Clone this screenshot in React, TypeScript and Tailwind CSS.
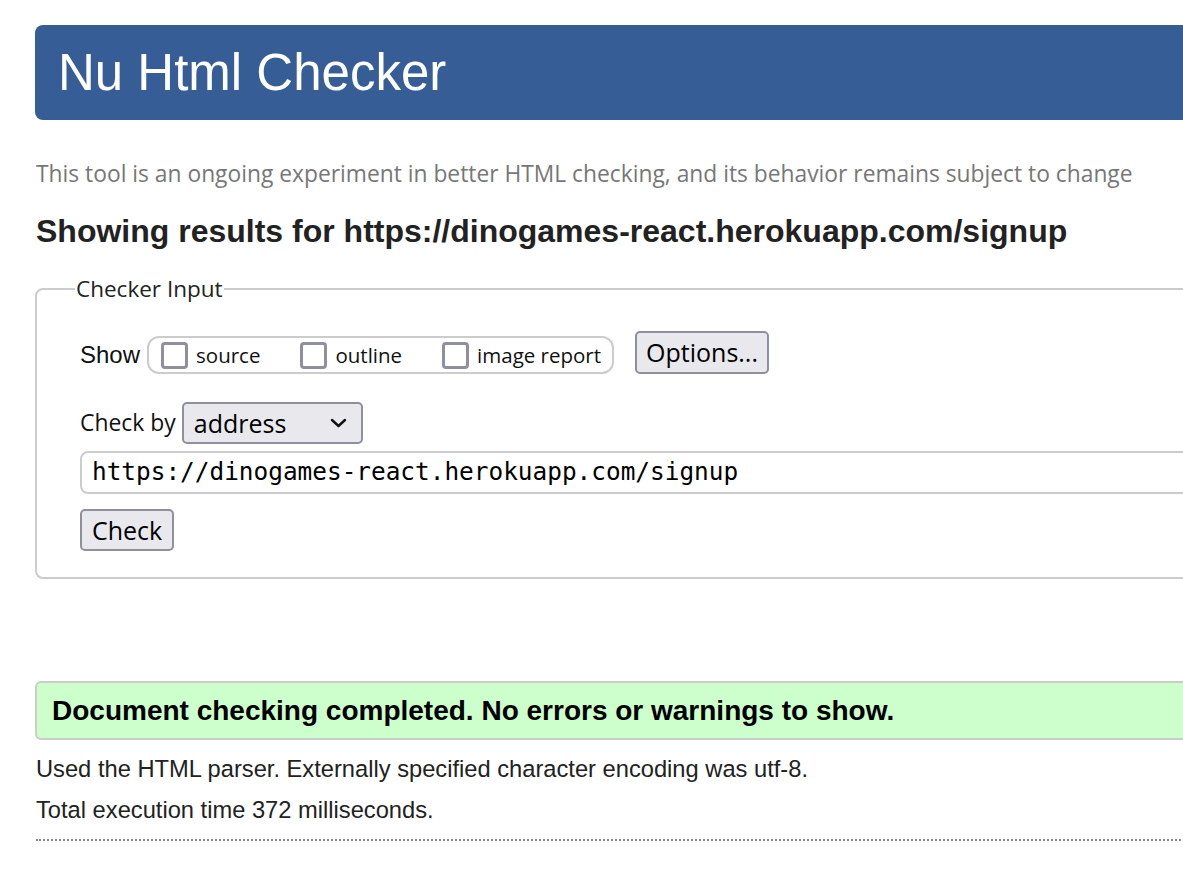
const seg = "font-['Open_Sans','Noto_Sans',sans-serif]";
const arial = "font-['Liberation_Sans',Arial,sans-serif]";

const Box = ({ label }: { label: string }) => (
  <label className="flex items-center gap-[8px]">
    <span className="w-[27px] h-[27px] rounded-[4px] border-[3px] border-[#8f8f9d] bg-white" />
    <span className={`${seg} text-[20.5px] text-[#111]`}>{label}</span>
  </label>
);

export default function App() {
  return (
    <div className="w-[1183px] h-[891px] overflow-hidden bg-white">
      <div className="w-[1400px] pl-[35px] pt-[25px]">
        <div className="h-[95px] bg-[#365d95] rounded-l-[8px] flex items-center pl-[23px]">
          <h1 className={`${arial} text-[51px] text-white leading-none`}>Nu Html Checker</h1>
        </div>

        <p className={`${seg} h-[30px] flex items-center text-[22.8px] text-[#777] mt-[39px] pl-px`}>
          This tool is an ongoing experiment in better HTML checking, and its behavior remains subject to change
        </p>

        <h2 className={`${arial} h-[36px] flex items-center font-bold text-[32px] text-[#222] mt-[24px] pl-px`}>
          Showing results for https://dinogames-react.herokuapp.com/signup
        </h2>

        <fieldset className="mt-[23px] border-2 border-[#ccc] rounded-l-[8px] pl-[43px] pb-[26px]">
          <legend className={`${seg} text-[22.5px] leading-[34px] text-[#222] px-[1px] -ml-[5px]`}>Checker Input</legend>

          <div className="flex items-end mt-[25px]">
            <span className={`${arial} h-[38px] flex items-center text-[24px] text-[#111]`}>Show</span>
            <div className="ml-[7px] w-[467px] h-[38px] border-2 border-[#ccc] rounded-[12px] flex items-center pl-[12px] gap-[40px]">
              <Box label="source" />
              <Box label="outline" />
              <Box label="image report" />
            </div>
            <button className={`${seg} ml-[21px] h-[43px] px-[9px] bg-[#e9e9ed] border-2 border-[#8f8f9d] rounded-[5px] text-[25px] text-black leading-none`}>
              Options...
            </button>
          </div>

          <div className="flex items-center mt-[28px]">
            <span className={`${seg} text-[22.9px] text-[#111]`}>Check by</span>
            <div className="ml-[6px] w-[181px] h-[42px] bg-[#e9e9ed] border-2 border-[#8f8f9d] rounded-[5px] flex items-center justify-between pl-[10px] pr-[14px]">
              <span className={`${seg} text-[25px] text-black leading-none`}>address</span>
              <svg width="17" height="10" viewBox="0 0 17 10" fill="none">
                <path d="M2 2l6.5 6 6.5-6" stroke="#111" strokeWidth="2.4" strokeLinecap="round" strokeLinejoin="round" />
              </svg>
            </div>
          </div>

          <div className="mt-[7px] h-[43px] border-2 border-[#ccc] rounded-l-[8px] flex items-center pl-[10px]">
            <span className="font-['DejaVu_Sans_Mono',monospace] text-[24.4px] text-black leading-none">
              https://dinogames-react.herokuapp.com/signup
            </span>
          </div>

          <button className={`${seg} mt-[15px] h-[42px] px-[10px] bg-[#e9e9ed] border-2 border-[#8f8f9d] rounded-[5px] text-[25px] text-black leading-none`}>
            Check
          </button>
        </fieldset>

        <div className="mt-[102px] h-[59px] bg-[#ccffcc] border-2 border-[#ccc] rounded-l-[6px] flex items-center pl-[15px]">
          <span className={`${arial} font-bold text-[28px] text-black leading-none`}>
            Document checking completed. No errors or warnings to show.
          </span>
        </div>

        <p className={`${arial} h-[30px] flex items-center text-[23.7px] text-[#222] mt-[15px] pl-px`}>
          Used the HTML parser. Externally specified character encoding was utf-8.
        </p>
        <p className={`${arial} h-[30px] flex items-center text-[23.7px] text-[#222] mt-[11px] pl-px`}>
          Total execution time 372 milliseconds.
        </p>
        <div className="mt-[13px] ml-px border-t-2 border-dotted border-[#888]" />
      </div>
    </div>
  );
}
